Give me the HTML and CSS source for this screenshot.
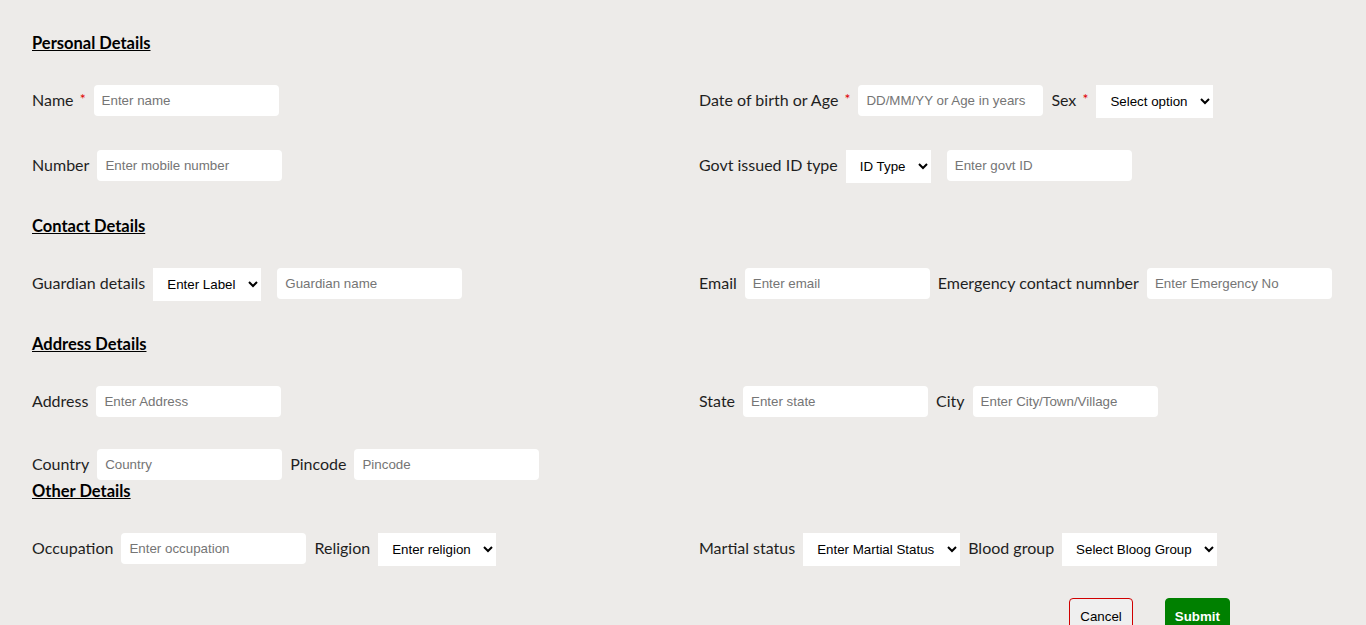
FILE: index.html
```html
<!DOCTYPE html>
<html lang="en">
<head>
<meta charset="utf-8">
<title>Registration</title>
<link rel="stylesheet" href="styles.css">
</head>
<body>
<form class="page">
  <section class="section">
    <h2 class="heading">Personal Details</h2>
    <div class="grid">
      <div class="field-row">
        <label class="label">Name <span class="req">*</span></label>
        <input class="input" type="text" placeholder="Enter name">
      </div>
      <div class="field-row">
        <label class="label">Date of birth or Age <span class="req">*</span></label>
        <input class="input" type="text" placeholder="DD/MM/YY or Age in years">
        <label class="label">Sex <span class="req">*</span></label>
        <select class="select"><option>Select option</option></select>
      </div>
      <div class="field-row">
        <label class="label">Number</label>
        <input class="input" type="text" placeholder="Enter mobile number">
      </div>
      <div class="field-row">
        <label class="label">Govt issued ID type</label>
        <select class="select select-spaced"><option>ID Type</option></select>
        <input class="input" type="text" placeholder="Enter govt ID">
      </div>
    </div>
  </section>

  <section class="section">
    <h2 class="heading">Contact Details</h2>
    <div class="grid">
      <div class="field-row">
        <label class="label">Guardian details</label>
        <select class="select select-spaced"><option>Enter Label</option></select>
        <input class="input" type="text" placeholder="Guardian name">
      </div>
      <div class="field-row">
        <label class="label">Email</label>
        <input class="input" type="email" placeholder="Enter email">
        <label class="label">Emergency contact numnber</label>
        <input class="input" type="text" placeholder="Enter Emergency No">
      </div>
    </div>
  </section>

  <section class="section section-tight">
    <h2 class="heading">Address Details</h2>
    <div class="grid">
      <div class="field-row">
        <label class="label">Address</label>
        <input class="input" type="text" placeholder="Enter Address">
      </div>
      <div class="field-row">
        <label class="label">State</label>
        <input class="input" type="text" placeholder="Enter state">
        <label class="label">City</label>
        <input class="input" type="text" placeholder="Enter City/Town/Village">
      </div>
      <div class="field-row">
        <label class="label">Country</label>
        <input class="input" type="text" placeholder="Country">
        <label class="label">Pincode</label>
        <input class="input" type="text" placeholder="Pincode">
      </div>
    </div>
  </section>

  <section class="section section-other">
    <h2 class="heading">Other Details</h2>
    <div class="grid">
      <div class="field-row">
        <label class="label">Occupation</label>
        <input class="input" type="text" placeholder="Enter occupation">
        <label class="label">Religion</label>
        <select class="select"><option>Enter religion</option></select>
      </div>
      <div class="field-row">
        <label class="label">Martial status</label>
        <select class="select"><option>Enter Martial Status</option></select>
        <label class="label">Blood group</label>
        <select class="select"><option>Select Bloog Group</option></select>
      </div>
    </div>
  </section>

  <div class="actions">
    <button type="button" class="btn btn-cancel">Cancel</button>
    <button type="submit" class="btn btn-submit">Submit</button>
  </div>
</form>
</body>
</html>
```

FILE: styles.css
```css
html, body {
  margin: 0;
  padding: 0;
  background: #edebe9;
}

body {
  font-family: Lato, "Open Sans", sans-serif;
  color: #1f1f1f;
}

.page {
  padding: 33px 0 0 32px;
  width: 1334px;
}

.section {
  margin-bottom: 33px;
}

.section-tight {
  margin-bottom: 1px;
}

.section-other {
  margin-bottom: 32px;
}

.heading {
  margin: 0;
  font-size: 16.5px;
  line-height: 20px;
  font-weight: 700;
  text-decoration: underline;
  color: #000;
}

.grid {
  display: grid;
  grid-template-columns: 1fr 1fr;
  row-gap: 32px;
  margin-top: 32px;
  align-items: start;
}

.field-row {
  display: flex;
  align-items: flex-start;
  gap: 8px;
}

.label {
  font-size: 16px;
  line-height: 29px;
  white-space: nowrap;
}

.req {
  color: #e00000;
  font-size: 14px;
  margin-left: 2px;
  position: relative;
  top: -2px;
}

.input {
  box-sizing: border-box;
  width: 185px;
  height: 31px;
  border: none;
  border-radius: 4px;
  padding: 0 8px;
  background: #fff;
  font-family: Arial, "Liberation Sans", sans-serif;
  font-size: 13.33px;
  color: #222;
}

.input::placeholder {
  color: #757575;
}

.select {
  box-sizing: border-box;
  height: 33px;
  border: none;
  border-radius: 0;
  padding: 0 9px 0 10px;
  background: #fff;
  font-family: Arial, "Liberation Sans", sans-serif;
  font-size: 13.33px;
  color: #000;
}

.select-spaced {
  margin-right: 8px;
}

.actions {
  display: flex;
  justify-content: flex-end;
  gap: 32px;
  padding-right: 136px;
}

.btn {
  font-family: Arial, "Liberation Sans", sans-serif;
  font-size: 13.33px;
  line-height: 16px;
  padding: 10px 10px;
  border-radius: 4px;
  cursor: pointer;
}

.btn-cancel {
  background: #efefef;
  border: 1px solid #d00000;
  color: #000;
}

.btn-submit {
  background: #008000;
  border: 1px solid #008000;
  color: #fff;
  font-weight: 700;
  padding: 10px 9px;
}
```
